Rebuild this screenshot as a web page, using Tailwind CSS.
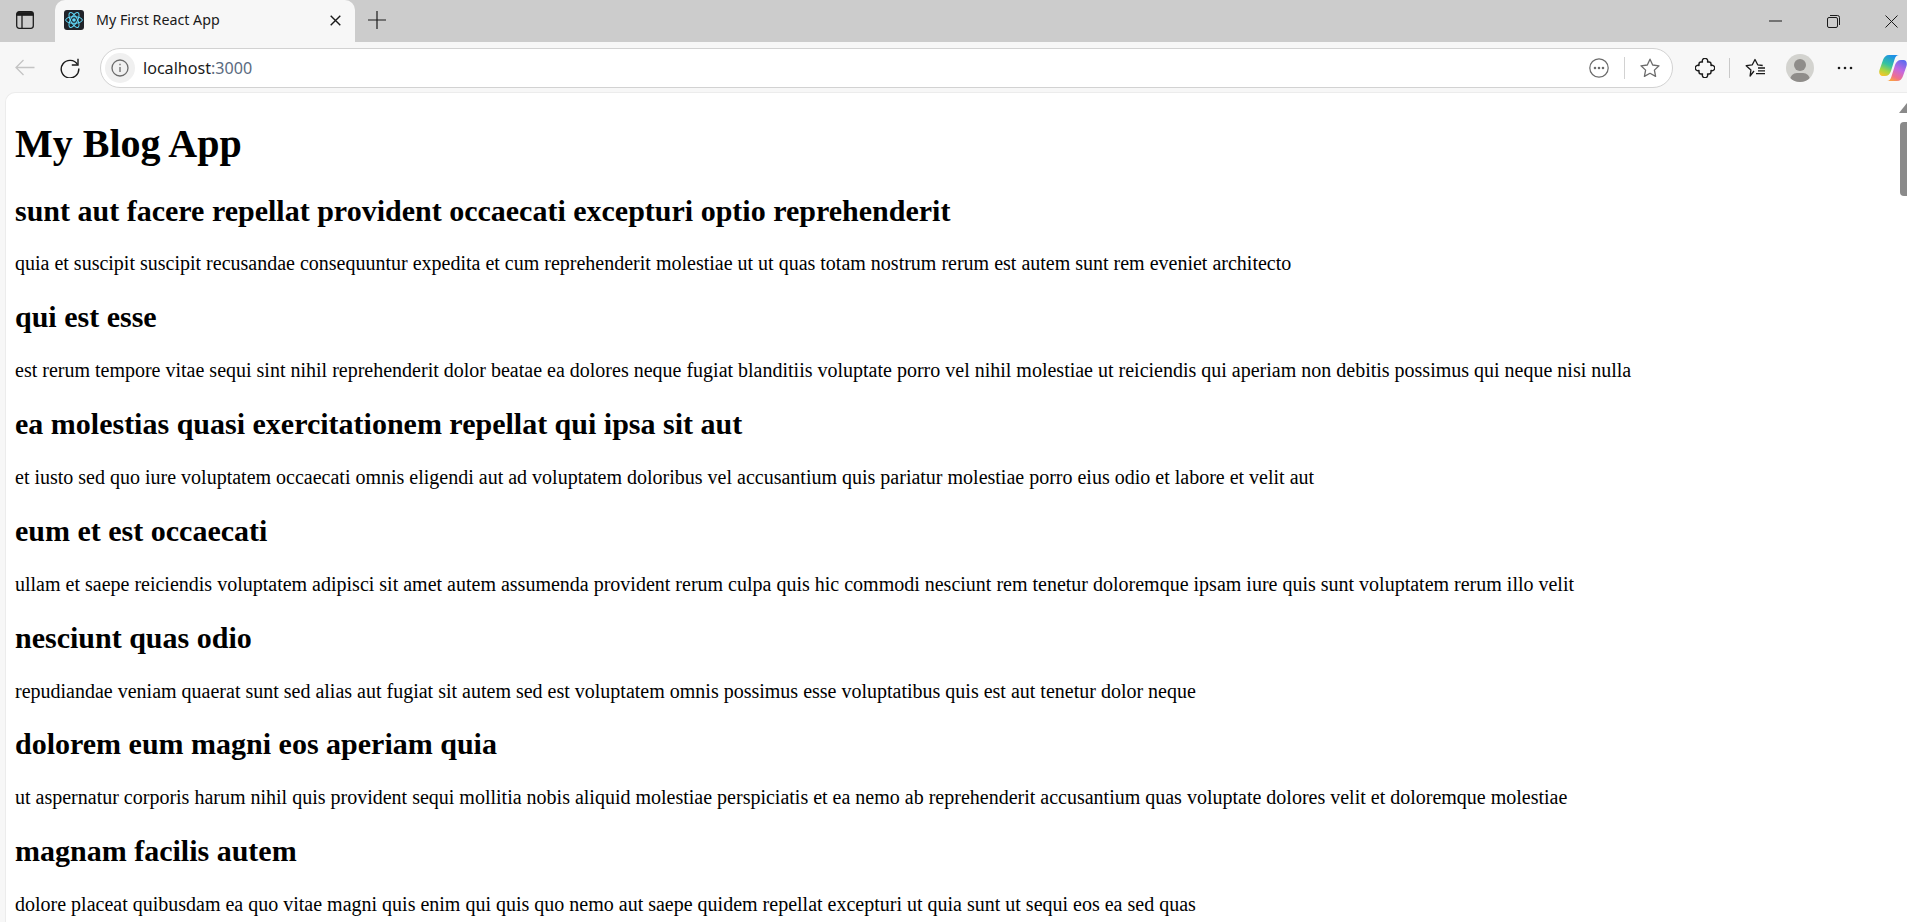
<!DOCTYPE html>
<html lang="en">
<head>
    <meta charset="UTF-8">
    <title>My First React App</title>
    <script src="https://cdn.jsdelivr.net/npm/@tailwindcss/browser@4"></script>
</head>
<body class="h-[922px] overflow-hidden bg-[#f7f7f7] font-['Liberation_Serif',serif] text-black">
    <!-- tab strip -->
    <div class="flex h-[42px] items-stretch bg-[#cccccc] font-['Noto_Sans',sans-serif]">
        <div class="flex w-[55px] items-center justify-center pr-[5px] pb-[2px]">
            <svg width="18" height="18" viewBox="0 0 18 18" fill="none" stroke="#1c1c1c" stroke-width="1.3"><rect x=".7" y=".7" width="16.600" height="16.600" rx="2.500"/><path d="M6 2v15"/><path d="M1 4.200a3 3 0 0 1 3-3h10a3 3 0 0 1 3 3z" fill="#1c1c1c"/></svg>
        </div>
        <div class="flex w-[300px] items-center rounded-t-[10px] bg-[#f7f7f7] pb-[2px] pl-[9px] pr-[14px]">
            <div class="flex h-5 w-5 items-center justify-center rounded-[3px] bg-[#20232a]">
                <svg width="20" height="20" viewBox="-12 -12 24 24" fill="none" stroke="#61dafb" stroke-width="1.200"><circle r="2.200" fill="#61dafb" stroke="none"/><ellipse rx="10" ry="4"/><ellipse rx="10" ry="4" transform="rotate(60)"/><ellipse rx="10" ry="4" transform="rotate(120)"/></svg>
            </div>
            <span class="ml-[12px] flex-1 text-[14.25px] leading-[20px] text-[#1a1a1a]">My First React App</span>
            <svg width="11" height="11" viewBox="0 0 11 11" stroke="#1a1a1a" stroke-width="1.400"><path d="M.7.7l9.600 9.600M10.300.7L.7 10.300"/></svg>
        </div>
        <div class="flex w-[44px] items-center justify-center pb-[2px]">
            <svg width="18" height="18" viewBox="0 0 18 18" stroke="#1a1a1a" stroke-width="1.200"><path d="M9 0v18M0 9h18"/></svg>
        </div>
        <div class="flex-1"></div>
        <div class="flex items-center gap-[45px] pr-[9px]">
            <svg width="13" height="2" viewBox="0 0 13 2" stroke="#1a1a1a"><path d="M0 1h13"/></svg>
            <svg width="13" height="13" viewBox="0 0 13 13" fill="none" stroke="#1a1a1a" stroke-width="1"><rect x=".5" y="2.500" width="10" height="10" rx="1.500"/><path d="M3 .5h7.500a2 2 0 0 1 2 2V10"/></svg>
            <svg width="13" height="13" viewBox="0 0 13 13" stroke="#1a1a1a" stroke-width="1"><path d="M.5.5l12 12M12.500.5l-12 12"/></svg>
        </div>
    </div>

    <!-- toolbar -->
    <div class="box-border flex h-[50px] items-center pt-[1px]">
        <div class="flex w-[100px] shrink-0 items-center">
            <svg class="ml-[15px]" width="20" height="17" viewBox="0 0 20 17" fill="none" stroke="#c4c4c4" stroke-width="1.300"><path d="M19.500 8.500H1M8.500 1L1 8.500 8.500 16"/></svg>
            <svg class="ml-[25px]" width="20" height="20" viewBox="0 0 20 20" fill="none" stroke="#1a1a1a" stroke-width="1.400"><path d="M17.500 6.500A8.800 8.800 0 1 0 18.800 10.500"/><path d="M18 .8v6.200h-6.200"/></svg>
        </div>
        <!-- address bar -->
        <div class="flex h-[40px] w-[1573px] shrink-0 items-center rounded-full border border-[#d2d2d2] bg-white pl-[4px] pr-[12px]">
            <div class="flex h-[30px] w-[30px] items-center justify-center rounded-full bg-[#f0f0f0]">
                <svg width="18" height="18" viewBox="0 0 18 18" fill="none" stroke="#6b6b6b" stroke-width="1.300"><circle cx="9" cy="9" r="8"/><path d="M9 8v5M9 4.800v1.500"/></svg>
            </div>
            <span class="ml-[8px] flex-1 pt-[1px] font-['Noto_Sans',sans-serif] text-[16.1px] text-[#1a1a1a]">localhost<span class="text-[#5b6b80]">:3000</span></span>
            <svg width="20" height="20" viewBox="0 0 20 20" fill="none" stroke="#6b6b6b" stroke-width="1.200"><circle cx="10" cy="10" r="9.200"/><circle cx="6" cy="10" r=".7" fill="#6b6b6b"/><circle cx="10" cy="10" r=".7" fill="#6b6b6b"/><circle cx="14" cy="10" r=".7" fill="#6b6b6b"/></svg>
            <div class="ml-[15px] h-[22px] w-px bg-[#d2d2d2]"></div>
            <svg class="ml-[15px]" width="20" height="20" viewBox="0 0 20 20" fill="none" stroke="#6b6b6b" stroke-width="1.300" stroke-linejoin="round"><path d="M10 1.200l2.700 5.800 6.300.8-4.600 4.300 1.200 6.300-5.600-3.100-5.600 3.100 1.200-6.300L1 7.800l6.300-.8z"/></svg>
        </div>
        <!-- right side buttons -->
        <div class="flex flex-1 items-center">
            <svg class="ml-[22px]" width="20" height="20" viewBox="0 0 20 20" fill="none" stroke="#1a1a1a" stroke-width="1.400" stroke-linejoin="round"><path d="M7.500 4A2.700 2.700 0 1 1 12.500 4H14a2 2 0 0 1 2 2V7.500A2.700 2.700 0 1 1 16 12.500V14a2 2 0 0 1-2 2H12.500A2.700 2.700 0 1 1 7.500 16H6a2 2 0 0 1-2-2V12.500A2.700 2.700 0 1 1 4 7.500V6A2 2 0 0 1 6 4z"/></svg>
            <div class="ml-[14px] h-[20px] w-px bg-[#c9c9c9]"></div>
            <svg class="ml-[15px]" width="21" height="20" viewBox="0 0 21 20" fill="none" stroke="#1a1a1a" stroke-width="1.300" stroke-linejoin="round"><path d="M9 13l-3.900 5 .8-6L1.200 7.700l6.100-.9L10 1.500l2.700 5.300 5 .7"/><path d="M13 10h7M13 12.800h7M11 15.600h9"/></svg>
            <div class="relative ml-[20px] h-7 w-7 overflow-hidden rounded-full bg-[#d3d3cf]">
                <div class="absolute left-[8px] top-[5px] h-[12px] w-[12px] rounded-full bg-[#8f8d8a]"></div>
                <div class="absolute left-[4px] top-[19px] h-[14px] w-[20px] rounded-full bg-[#8f8d8a]"></div>
            </div>
            <svg class="ml-[23px]" width="16" height="4" viewBox="0 0 16 4" fill="#1a1a1a"><circle cx="2" cy="2" r="1.300"/><circle cx="8" cy="2" r="1.300"/><circle cx="14" cy="2" r="1.300"/></svg>
            <svg class="ml-[26px] shrink-0" width="28" height="26" viewBox="0 0 28 26" fill="none"><defs><linearGradient id="cpA" x1="0.6" y1="0" x2="0.2" y2="1"><stop offset="0" stop-color="#1c8fe8"/><stop offset=".45" stop-color="#35c3a0"/><stop offset=".75" stop-color="#a8d640"/><stop offset="1" stop-color="#f6c42c"/></linearGradient><linearGradient id="cpB" x1="0.8" y1="0" x2="0.3" y2="1"><stop offset="0" stop-color="#5a6cf0"/><stop offset=".45" stop-color="#c468e0"/><stop offset=".8" stop-color="#f0708c"/><stop offset="1" stop-color="#f9a046"/></linearGradient></defs><path d="M10 0h10c-2 0-3.500 1.500-4.300 4l-3.700 12c-1 3-3 5-6 5H3.500C1 21-.5 18.500.5 15L4 5c1-3 3-5 6-5z" fill="url(#cpA)"/><path d="M18 26H8c2 0 3.500-1.500 4.300-4l3.700-12c1-3 3-5 6-5h2.500c2.500 0 4 2.500 3 6l-3.500 10c-1 3-3 5-6 5z" fill="url(#cpB)"/></svg>
        </div>
    </div>

    <!-- page content -->
    <div class="relative ml-[5px] h-[830px] overflow-hidden rounded-tl-[10px] border-t border-l border-[#ececec] bg-white pt-[28px] pl-[9px]">
        <h1 class="mb-[26.5px] text-[40px] leading-[46px] font-bold">My Blog App</h1>
        <h2 class="text-[30px] leading-[34px] font-bold">sunt aut facere repellat provident occaecati excepturi optio reprehenderit</h2>
        <p class="my-[24.9px] text-[20px] leading-[23px]">quia et suscipit suscipit recusandae consequuntur expedita et cum reprehenderit molestiae ut ut quas totam nostrum rerum est autem sunt rem eveniet architecto</p>
        <h2 class="text-[30px] leading-[34px] font-bold">qui est esse</h2>
        <p class="my-[24.9px] text-[20px] leading-[23px]">est rerum tempore vitae sequi sint nihil reprehenderit dolor beatae ea dolores neque fugiat blanditiis voluptate porro vel nihil molestiae ut reiciendis qui aperiam non debitis possimus qui neque nisi nulla</p>
        <h2 class="text-[30px] leading-[34px] font-bold">ea molestias quasi exercitationem repellat qui ipsa sit aut</h2>
        <p class="my-[24.9px] text-[20px] leading-[23px]">et iusto sed quo iure voluptatem occaecati omnis eligendi aut ad voluptatem doloribus vel accusantium quis pariatur molestiae porro eius odio et labore et velit aut</p>
        <h2 class="text-[30px] leading-[34px] font-bold">eum et est occaecati</h2>
        <p class="my-[24.9px] text-[20px] leading-[23px]">ullam et saepe reiciendis voluptatem adipisci sit amet autem assumenda provident rerum culpa quis hic commodi nesciunt rem tenetur doloremque ipsam iure quis sunt voluptatem rerum illo velit</p>
        <h2 class="text-[30px] leading-[34px] font-bold">nesciunt quas odio</h2>
        <p class="my-[24.9px] text-[20px] leading-[23px]">repudiandae veniam quaerat sunt sed alias aut fugiat sit autem sed est voluptatem omnis possimus esse voluptatibus quis est aut tenetur dolor neque</p>
        <h2 class="text-[30px] leading-[34px] font-bold">dolorem eum magni eos aperiam quia</h2>
        <p class="my-[24.9px] text-[20px] leading-[23px]">ut aspernatur corporis harum nihil quis provident sequi mollitia nobis aliquid molestiae perspiciatis et ea nemo ab reprehenderit accusantium quas voluptate dolores velit et doloremque molestiae</p>
        <h2 class="text-[30px] leading-[34px] font-bold">magnam facilis autem</h2>
        <p class="my-[24.9px] text-[20px] leading-[23px]">dolore placeat quibusdam ea quo vitae magni quis enim qui quis quo nemo aut saepe quidem repellat excepturi ut quia sunt ut sequi eos ea sed quas</p>

        <!-- scrollbar overlay -->
        <div class="absolute right-0 top-[10px] h-0 w-0 border-l-[8px] border-b-[10px] border-l-transparent border-b-[#8a8a8a]"></div>
        <div class="absolute right-0 top-[29px] h-[74px] w-[7px] rounded-l-[4px] bg-[#8a8a8a]"></div>
    </div>
</body>
</html>
